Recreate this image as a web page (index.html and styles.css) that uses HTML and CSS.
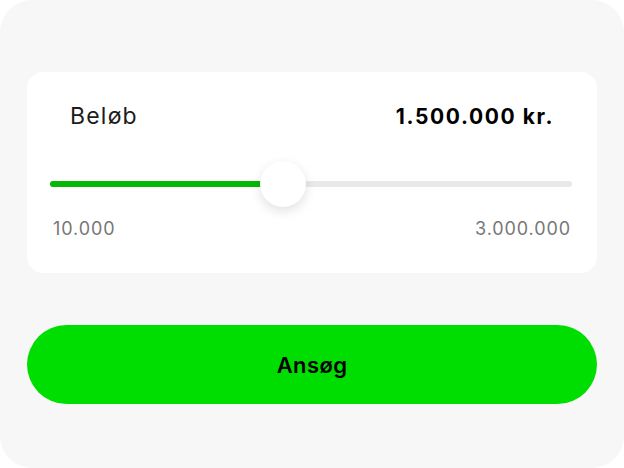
FILE: index.html
```html
<!DOCTYPE html>
<html lang="da">
<head>
    <meta charset="UTF-8">
    <meta name="viewport" content="width=device-width, initial-scale=1.0">
    <title>Beløb</title>
    <link rel="stylesheet" href="styles.css">
</head>
<body>
    <div class="panel">
        <div class="card">
            <div class="amount-row">
                <span class="label">Beløb</span>
                <span class="value">1.500.000 kr.</span>
            </div>
            <div class="slider">
                <div class="track">
                    <div class="fill" style="width: 44.6%"></div>
                </div>
                <div class="thumb" style="left: 44.6%"></div>
            </div>
            <div class="range">
                <span>10.000</span>
                <span>3.000.000</span>
            </div>
        </div>
        <button class="apply">Ansøg</button>
    </div>
</body>
</html>
```

FILE: styles.css
```css
body {
    margin: 0;
    background: #fff;
    font-family: Inter, "Liberation Sans", sans-serif;
}

.panel {
    height: 468px;
    box-sizing: border-box;
    background: #f7f7f7;
    border-radius: 32px;
    padding: 72px 27px 0 27px;
}

.card {
    background: #fff;
    border-radius: 16px;
    height: 201px;
    box-sizing: border-box;
    padding: 22px 25px 0 23px;
}

.amount-row {
    display: flex;
    justify-content: space-between;
    align-items: center;
    height: 44px;
    padding: 0 18px 0 20px;
}

.label {
    font-size: 23px;
    letter-spacing: 1.2px;
    color: #1c1c1c;
}

.value {
    font-size: 21px;
    font-weight: 700;
    letter-spacing: 1.6px;
    color: #000;
}

.slider {
    position: relative;
    height: 46px;
    margin-top: 23px;
    display: flex;
    align-items: center;
}

.track {
    width: 100%;
    height: 6px;
    border-radius: 3px;
    background: #e9e9e9;
}

.fill {
    height: 100%;
    border-radius: 3px;
    background: #06b806;
}

.thumb {
    position: absolute;
    top: 0;
    width: 46px;
    height: 46px;
    margin-left: -23px;
    border-radius: 50%;
    background: #fff;
    box-shadow: 0 4px 12px rgba(0, 0, 0, 0.12);
}

.range {
    display: flex;
    justify-content: space-between;
    margin-top: 12px;
    padding: 0 1px 0 3px;
    font-size: 18px;
    letter-spacing: 0.9px;
    line-height: 20px;
    color: #777;
}

.apply {
    display: block;
    width: 100%;
    height: 79px;
    margin-top: 52px;
    border: none;
    border-radius: 40px;
    background: #00dd00;
    color: #000;
    font-family: inherit;
    font-size: 22px;
    font-weight: 600;
    letter-spacing: 0.4px;
}
```
